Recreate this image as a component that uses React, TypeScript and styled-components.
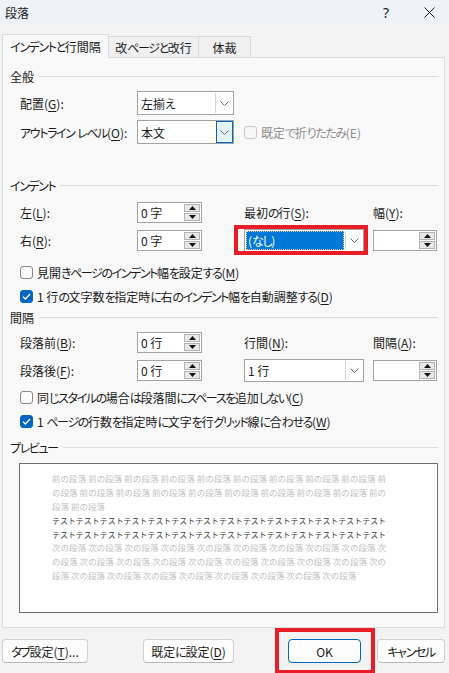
import React from "react";
import styled, { createGlobalStyle } from "styled-components";

const GlobalStyle = createGlobalStyle`
  html, body { margin: 0; padding: 0; }
  body {
    width: 449px; height: 673px; overflow: hidden; background: #f3f3f3;
    font-family: "Noto Sans CJK JP", "Noto Sans", sans-serif;
    font-size: 12px; color: #1a1a1a; font-feature-settings: "palt";
  }
  * { box-sizing: border-box; }
`;

const Kana = styled.span` letter-spacing: -1.4px; `;
const jp = (s: string) =>
  s.split(/([\u3040-\u30ff]+)/).map((part, i) =>
    /[\u3040-\u30ff]/.test(part) ? <Kana key={i}>{part}</Kana> : <React.Fragment key={i}>{part}</React.Fragment>
  );

const Dialog = styled.div`
  width: 449px; height: 673px; display: flex; flex-direction: column;
  background: #f3f3f3; overflow: hidden;
`;

const TitleBar = styled.div`
  height: 25px; flex: none; background: #eef2f9; display: flex; align-items: center; padding-left: 5px;
`;
const Title = styled.span` flex: 1; font-size: 12px; line-height: 1; `;
const TitleBtn = styled.div<{ $w: number }>`
  width: ${(p) => p.$w}px; height: 25px; display: flex; align-items: center; justify-content: center;
  font-family: "Noto Sans", sans-serif; font-size: 14px; color: #1a1a1a;
`;

const TabRow = styled.div`
  height: 32px; flex: none; display: flex; align-items: flex-end; padding-left: 2px;
`;
const Tab = styled.div<{ $w: number; $active?: boolean }>`
  width: ${(p) => p.$w}px; height: ${(p) => (p.$active ? 24 : 21)}px;
  margin-bottom: ${(p) => (p.$active ? -1 : 0)}px;
  margin-left: ${(p) => (p.$active ? 0 : -1)}px;
  border: 1px solid #dadada; border-bottom: none;
  background: ${(p) => (p.$active ? "#f9f9f9" : "#f0f0f0")};
  display: flex; align-items: center; justify-content: center;
  padding-top: ${(p) => (p.$active ? 0 : 1)}px;
  position: relative; z-index: ${(p) => (p.$active ? 2 : 1)};
  font-size: 12px; color: #1a1a1a; white-space: nowrap;
`;

const Panel = styled.div`
  height: 571px; flex: none; margin: 0 4px 0 2px; border: 1px solid #dcdcdc; background: #f9f9f9;
  padding: 9px 6px 0 7px; display: flex; flex-direction: column;
`;

const SectionHeader = styled.div<{ $mt: number }>`
  display: flex; align-items: center; gap: 5px; height: 18px; margin-top: ${(p) => p.$mt}px;
  font-size: 12px; color: #1a1a1a; white-space: nowrap;
  &::after { content: ""; flex: 1; height: 1px; background: #dcdcdc; }
`;

const Row = styled.div<{ $mt: number; $h?: number }>`
  display: flex; align-items: center; margin-top: ${(p) => p.$mt}px; height: ${(p) => p.$h ?? 24}px; padding-left: 10px;
`;

const Label = styled.span<{ $w?: number }>`
  ${(p) => (p.$w ? `width: ${p.$w}px; flex: none;` : "")}
  white-space: nowrap; font-size: 12px; color: #1a1a1a;
  u { text-decoration-thickness: 1px; text-underline-offset: 2px; }
`;

const SelectBox = styled.div<{ $w: number; $h: number }>`
  width: ${(p) => p.$w}px; height: ${(p) => p.$h}px; border: 1px solid #a3a3a3; background: #fff;
  display: flex; align-items: stretch; flex: none;
`;
const SelectText = styled.div<{ $sel?: boolean }>`
  flex: 1; display: flex; align-items: center; white-space: nowrap;
  padding-left: ${(p) => (p.$sel ? 2 : 3)}px;
  margin: ${(p) => (p.$sel ? "1px" : "0")};
  background: ${(p) => (p.$sel ? "#0078d7" : "transparent")};
  color: ${(p) => (p.$sel ? "#fff" : "#1a1a1a")};
  outline: ${(p) => (p.$sel ? "1px dotted #f3c58a" : "none")};
  outline-offset: -1px;
`;
const DropBtn = styled.div<{ $focus?: boolean }>`
  width: 17px; flex: none; margin: ${(p) => (p.$focus ? "0" : "1px 1px 1px 0")};
  border: 1px solid ${(p) => (p.$focus ? "#0067c0" : "#d6d6d6")};
  ${(p) => (p.$focus ? "" : "border-top: none; border-right: none; border-bottom: none;")}
  background: ${(p) => (p.$focus ? "#e5f1fb" : "#fff")};
  display: flex; align-items: center; justify-content: center;
`;

const SpinBox = styled.div<{ $w: number }>`
  width: ${(p) => p.$w}px; height: 21px; border: 1px solid #a3a3a3; background: #fff; display: flex; flex: none;
`;
const SpinText = styled.div` flex: 1; display: flex; align-items: center; padding-left: 3px; white-space: nowrap; `;
const SpinButtons = styled.div`
  width: 16px; flex: none; margin: 1px 1px 1px 0; display: flex; flex-direction: column; gap: 1px;
`;
const SpinBtn = styled.div`
  flex: 1; background: #e8e8e8; border: 1px solid #b3b3b3; display: flex; align-items: center; justify-content: center;
`;

const FieldGrid = styled.div<{ $mt: number }>`
  display: grid; grid-template-columns: 117px 107px 129px 65px; grid-template-rows: 21px 23px;
  row-gap: 6px; margin-top: ${(p) => p.$mt}px; padding-left: 10px; align-items: center;
`;

const Highlight = styled.div`
  position: relative; width: 120px; height: 23px;
  &::after {
    content: ""; position: absolute; left: -10px; top: -4px; right: -4px; bottom: -3px;
    border: 4px solid #e81d25; pointer-events: none;
  }
`;

const CheckRow = styled.div<{ $mt: number }>`
  display: flex; align-items: center; gap: 4px; height: 18px; margin-top: ${(p) => p.$mt}px;
  padding-left: 10px; white-space: nowrap; color: #1a1a1a;
  u { text-decoration-thickness: 1px; text-underline-offset: 2px; }
`;
const CheckInline = styled.div`
  display: flex; align-items: center; gap: 4px; margin-left: 10px; white-space: nowrap; color: #8c8c8c;
`;
const Box = styled.span<{ $checked?: boolean; $disabled?: boolean }>`
  width: 13px; height: 13px; flex: none; border-radius: 3px;
  border: 1px solid ${(p) => (p.$checked ? "#0067c0" : p.$disabled ? "#c8c8c8" : "#878787")};
  background: ${(p) => (p.$checked ? "#0067c0" : p.$disabled ? "#f7f7f7" : "#fbfbfb")};
  display: flex; align-items: center; justify-content: center;
`;

const PreviewBox = styled.div`
  margin: 7px 0 0 9px; width: 419px; height: 150px; border: 1px solid #6e6e6e; background: #fff;
  padding: 8px 0 0 32px; font-feature-settings: normal;
`;
const PreviewLine = styled.div<{ $dark?: boolean; $justify?: boolean }>`
  width: 334px; height: 13.9px; line-height: 13.9px; overflow: visible;
  font-size: ${(p) => (p.$dark ? 7.9 : 8.5)}px;
  color: ${(p) => (p.$dark ? "#3d3d3d" : "#c2c2c2")};
  text-align: ${(p) => (p.$justify ? "justify" : "left")};
  text-align-last: ${(p) => (p.$justify ? "justify" : "auto")};
`;

const Footer = styled.div`
  flex: 1; display: flex; align-items: flex-start; padding: 11px 0 0 2px;
`;
const Button = styled.div<{ $w: number; $ml: number; $primary?: boolean }>`
  width: ${(p) => p.$w}px; margin-left: ${(p) => p.$ml}px; height: 24px; flex: none;
  border: 1px solid ${(p) => (p.$primary ? "#0067c0" : "#d0d0d0")};
  border-bottom-color: ${(p) => (p.$primary ? "#0067c0" : "#b8b8b8")};
  border-radius: 4px; background: #fdfdfd;
  display: flex; align-items: center; justify-content: center; font-size: 12px; color: #1a1a1a; white-space: nowrap;
  u { text-decoration-thickness: 1px; text-underline-offset: 2px; }
`;
const ButtonMark = styled.div`
  position: relative; display: flex; margin-left: 54px;
  &::after {
    content: ""; position: absolute; left: -13px; top: -11px; right: -14px; bottom: -11px;
    border: 4px solid #e81d25; pointer-events: none;
  }
`;

const Chevron = () => (
  <svg width="9" height="5" viewBox="0 0 9 5">
    <polyline points="0.5,0.5 4.5,4.5 8.5,0.5" fill="none" stroke="#6b6b6b" strokeWidth="1" />
  </svg>
);
const TriUp = () => (
  <svg width="7" height="4" viewBox="0 0 7 4"><polygon points="3.5,0 7,4 0,4" fill="#111" /></svg>
);
const TriDown = () => (
  <svg width="7" height="4" viewBox="0 0 7 4"><polygon points="0,0 7,0 3.5,4" fill="#111" /></svg>
);
const Check = () => (
  <svg width="9" height="7" viewBox="0 0 9 7">
    <polyline points="1,3.6 3.4,6 8,1" fill="none" stroke="#fff" strokeWidth="1.3" />
  </svg>
);

const Spin: React.FC<{ w: number; text?: string }> = ({ w, text }) => (
  <SpinBox $w={w}>
    <SpinText>{text}</SpinText>
    <SpinButtons>
      <SpinBtn><TriUp /></SpinBtn>
      <SpinBtn><TriDown /></SpinBtn>
    </SpinButtons>
  </SpinBox>
);

const Select: React.FC<{ w: number; h: number; text: string; focus?: boolean; sel?: boolean }> = ({ w, h, text, focus, sel }) => (
  <SelectBox $w={w} $h={h}>
    <SelectText $sel={sel}>{jp(text)}</SelectText>
    <DropBtn $focus={focus}><Chevron /></DropBtn>
  </SelectBox>
);

const rep = (s: string, n: number) => Array(n).fill(s).join(" ");

export default function App() {
  return (
    <>
      <GlobalStyle />
      <Dialog>
        <TitleBar>
          <Title>段落</Title>
          <TitleBtn $w={46}>?</TitleBtn>
          <TitleBtn $w={40}>
            <svg width="11" height="11" viewBox="0 0 11 11">
              <path d="M0.5 0.5 L10.5 10.5 M10.5 0.5 L0.5 10.5" stroke="#1a1a1a" strokeWidth="1" />
            </svg>
          </TitleBtn>
        </TitleBar>
        <TabRow>
          <Tab $w={107} $active>{jp("インデントと行間隔")}</Tab>
          <Tab $w={91}>{jp("改ページと改行")}</Tab>
          <Tab $w={53}>体裁</Tab>
        </TabRow>
        <Panel>
          <SectionHeader $mt={0}>全般</SectionHeader>
          <Row $mt={6}>
            <Label $w={117}>配置(<u>G</u>):</Label>
            <Select w={97} h={24} text="左揃え" />
          </Row>
          <Row $mt={5}>
            <Label $w={117}>{jp("アウトライン レベル")}(<u>O</u>):</Label>
            <Select w={97} h={24} text="本文" focus />
            <CheckInline>
              <Box $disabled />
              <span>{jp("既定で折りたたみ")}(E)</span>
            </CheckInline>
          </Row>

          <SectionHeader $mt={32}>{jp("インデント")}</SectionHeader>
          <FieldGrid $mt={8}>
            <Label>左(<u>L</u>):</Label>
            <Spin w={65} text="0 字" />
            <Label>{jp("最初の行")}(<u>S</u>):</Label>
            <Label>幅(<u>Y</u>):</Label>
            <Label>右(<u>R</u>):</Label>
            <Spin w={65} text="0 字" />
            <Highlight>
              <Select w={120} h={23} text="(なし)" sel />
            </Highlight>
            <Spin w={64} />
          </FieldGrid>
          <CheckRow $mt={11}>
            <Box />
            <span>{jp("見開きページのインデント幅を設定する")}(<u>M</u>)</span>
          </CheckRow>
          <CheckRow $mt={6}>
            <Box $checked><Check /></Box>
            <span>{jp("1 行の文字数を指定時に右のインデント幅を自動調整する")}(<u>D</u>)</span>
          </CheckRow>

          <SectionHeader $mt={3}>間隔</SectionHeader>
          <FieldGrid $mt={6}>
            <Label>段落前(<u>B</u>):</Label>
            <Spin w={65} text="0 行" />
            <Label>行間(<u>N</u>):</Label>
            <Label>間隔(<u>A</u>):</Label>
            <Label>段落後(<u>F</u>):</Label>
            <Spin w={65} text="0 行" />
            <Select w={120} h={23} text="1 行" />
            <Spin w={64} />
          </FieldGrid>
          <CheckRow $mt={6}>
            <Box />
            <span>{jp("同じスタイルの場合は段落間にスペースを追加しない")}(<u>C</u>)</span>
          </CheckRow>
          <CheckRow $mt={6}>
            <Box $checked><Check /></Box>
            <span>{jp("1 ページの行数を指定時に文字を行グリッド線に合わせる")}(<u>W</u>)</span>
          </CheckRow>

          <SectionHeader $mt={8}>{jp("プレビュー")}</SectionHeader>
          <PreviewBox>
            <PreviewLine $justify>{rep("前の段落", 9) + " 前"}</PreviewLine>
            <PreviewLine $justify>{"の段落 " + rep("前の段落", 8) + " 前の"}</PreviewLine>
            <PreviewLine>{"段落 前の段落"}</PreviewLine>
            <PreviewLine $dark $justify>{"テスト".repeat(14)}</PreviewLine>
            <PreviewLine $dark $justify>{"テスト".repeat(14)}</PreviewLine>
            <PreviewLine $justify>{rep("次の段落", 9) + " 次"}</PreviewLine>
            <PreviewLine $justify>{"の段落 " + rep("次の段落", 8) + " 次の"}</PreviewLine>
            <PreviewLine>{"段落 " + rep("次の段落", 8)}</PreviewLine>
          </PreviewBox>
        </Panel>
        <Footer>
          <Button $w={86} $ml={0}>{jp("タブ設定")}(<u>T</u>)...</Button>
          <Button $w={91} $ml={55}>{jp("既定に設定")}(<u>D</u>)</Button>
          <ButtonMark>
            <Button $w={73} $ml={0} $primary>OK</Button>
          </ButtonMark>
          <Button $w={68} $ml={16}>{jp("キャンセル")}</Button>
        </Footer>
      </Dialog>
    </>
  );
}
